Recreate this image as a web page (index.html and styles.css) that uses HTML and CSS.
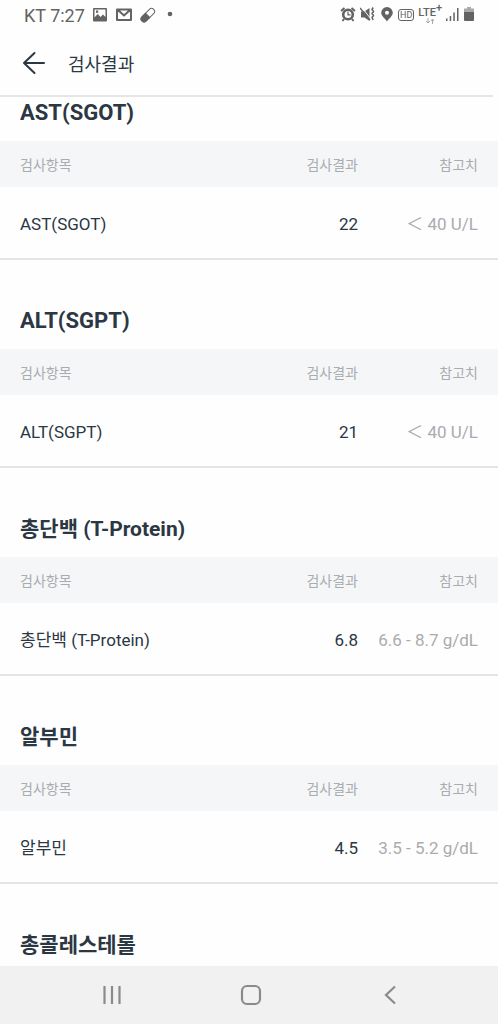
FILE: index.html
```html
<!DOCTYPE html>
<html lang="ko">
<head>
<meta charset="utf-8">
<meta name="viewport" content="width=device-width, initial-scale=1">
<title>검사결과</title>
<link rel="stylesheet" href="styles.css">
</head>
<body>
<div class="status">
  <span class="carrier">KT 7:27</span>
  <div class="status-left">
    <svg class="picture" width="16" height="16" viewBox="0 0 16 16"><path fill="currentColor" fill-rule="evenodd" d="M2 1h12q1 0 1 1v11.500q0 1-1 1H2q-1 0-1-1V2q0-1 1-1zM2.500 2.500v8l3.200-3.500 2.800 3 2.500-2.500 2.500 2.500v-7.500zM4 3.600h2.200v2.200H4z"/></svg>
    <svg class="mail" width="18" height="16" viewBox="0 0 18 16"><path fill="none" stroke="currentColor" stroke-width="2" stroke-linejoin="round" d="M2 2.500h14v10.500H2zM3 3l6 5.500L15 3"/></svg>
    <svg class="pill" width="16" height="16" viewBox="0 0 16 16"><g transform="rotate(-45 8 8)"><rect x="-0.500" y="5" width="16.500" height="6" rx="3" fill="none" stroke="currentColor" stroke-width="1"/><path fill="currentColor" d="M8 4.500v7H2.500a3.500 3.500 0 0 1 0-7z"/></g></svg>
    <svg class="dot" width="6" height="16" viewBox="0 0 6 16"><circle cx="3" cy="7" r="2.300" fill="currentColor"/></svg>
  </div>
  <div class="status-right">
    <svg width="16" height="16" viewBox="0 0 16 16"><path fill="none" stroke="currentColor" stroke-width="2" d="M1 4l3.500-3M15 4l-3.500-3M4 12l-1.500 2M12 12l1.500 2"/><circle cx="8" cy="7.500" r="4.800" fill="none" stroke="currentColor" stroke-width="2.600"/><path fill="none" stroke="currentColor" stroke-width="1.200" d="M8 4.500v3.300h2.500"/></svg>
    <svg width="16" height="16" viewBox="0 0 16 16"><path fill="currentColor" d="M1 4.500h3.500L9.500 1v13L4.500 10.500H1z"/><path stroke="#fff" stroke-width="1" d="M1.500 0l9 11.500"/><path stroke="currentColor" stroke-width="1.400" d="M0 1l10 12"/><path fill="none" stroke="currentColor" stroke-width="1.500" stroke-linejoin="round" d="M13.200 .5l-1.200 2 1.500 2-1.500 2 1.500 2-1.500 2 1.200 2.500"/></svg>
    <svg width="14" height="16" viewBox="0 0 14 16"><path fill="currentColor" fill-rule="evenodd" d="M7 0a5.800 5.800 0 0 1 5.800 5.800C12.800 9 9 11.500 7 14.500 5 11.500 1.200 9 1.200 5.800A5.800 5.800 0 0 1 7 0zm0 3.700a2 2 0 1 0 0 4 2 2 0 0 0 0-4z"/></svg>
    <span class="hd">HD</span>
    <span class="lte"><span>LTE<sup>+</sup></span><svg width="8" height="6" viewBox="0 0 8 6"><path fill="none" stroke="#aaa" d="M2 0v5M0 3l2 2 2-2M6.500 6V1M5 3l1.500-2L8 3"/></svg></span>
    <svg width="14" height="16" viewBox="0 0 14 16"><path fill="currentColor" d="M0 11.500h1.500v2.500H0zM3.700 9h1.500v5H3.700zM7.300 5.500h1.500V14H7.300zM11 1h1.500v13H11z"/></svg>
    <svg width="10" height="16" viewBox="0 0 10 16"><path fill="#aaa" d="M3 0h4v1.500h3V5H0V1.500h3z"/><path fill="currentColor" d="M0 5h10v8q0 1-1 1H1q-1 0-1-1z"/></svg>
  </div>
</div>
<header class="appbar">
  <button class="back" type="button" aria-label="뒤로"><svg width="24" height="24" viewBox="0 0 24 24"><path fill="none" stroke="currentColor" stroke-width="2" stroke-linecap="round" stroke-linejoin="round" d="M12.500 2L2 12l10.500 10M2 12h20"/></svg></button>
  <h1>검사결과</h1>
</header>
<main class="results">
  <section>
    <h2 id="ast" class="latin">AST(SGOT)</h2>
    <table aria-labelledby="ast">
      <thead><tr><th>검사항목</th><th class="value">검사결과</th><th class="range">참고치</th></tr></thead>
      <tbody><tr><td>AST(SGOT)</td><td class="value">22</td><td class="range">&#65308; 40 U/L</td></tr></tbody>
    </table>
  </section>
  <section>
    <h2 id="alt" class="latin">ALT(SGPT)</h2>
    <table aria-labelledby="alt">
      <thead><tr><th>검사항목</th><th class="value">검사결과</th><th class="range">참고치</th></tr></thead>
      <tbody><tr><td>ALT(SGPT)</td><td class="value">21</td><td class="range">&#65308; 40 U/L</td></tr></tbody>
    </table>
  </section>
  <section>
    <h2 id="protein">총단백 (T-Protein)</h2>
    <table aria-labelledby="protein">
      <thead><tr><th>검사항목</th><th class="value">검사결과</th><th class="range">참고치</th></tr></thead>
      <tbody><tr><td>총단백 (T-Protein)</td><td class="value">6.8</td><td class="range">6.6 - 8.7 g/dL</td></tr></tbody>
    </table>
  </section>
  <section>
    <h2 id="albumin">알부민</h2>
    <table aria-labelledby="albumin">
      <thead><tr><th>검사항목</th><th class="value">검사결과</th><th class="range">참고치</th></tr></thead>
      <tbody><tr><td>알부민</td><td class="value">4.5</td><td class="range">3.5 - 5.2 g/dL</td></tr></tbody>
    </table>
  </section>
  <section>
    <h2>총콜레스테롤</h2>
  </section>
</main>
<nav class="navbar">
  <button type="button" aria-label="최근 앱"><svg width="24" height="24" viewBox="0 0 24 24"><path stroke="currentColor" stroke-width="2.200" d="M4.500 3v18M12 3v18M19.500 3v18"/></svg></button>
  <button type="button" aria-label="홈"><svg width="24" height="24" viewBox="0 0 24 24"><rect x="3" y="3" width="18" height="18" rx="5" fill="none" stroke="currentColor" stroke-width="2.200"/></svg></button>
  <button type="button" aria-label="이전"><svg width="24" height="24" viewBox="0 0 24 24"><path fill="none" stroke="currentColor" stroke-width="2.200" d="M17 3.500L8 12l9 8.500"/></svg></button>
</nav>
</body>
</html>
```
FILE: styles.css
```css
* {
  box-sizing: border-box;
}

body {
  margin: 0;
  height: 100vh;
  display: flex;
  flex-direction: column;
  overflow: hidden;
  background: #fefefe;
  color: #2b3743;
  font-family: Roboto, "Noto Sans CJK KR", sans-serif;
  font-size: 17px;
}

svg {
  display: block;
  flex: none;
}

button {
  padding: 0;
  border: 0;
  background: none;
  color: inherit;
}

.status {
  flex: none;
  height: 30px;
  padding: 0 24px;
  display: flex;
  align-items: center;
  color: #636363;
}

.carrier {
  font-size: 18px;
}

.status-left {
  display: flex;
  align-items: center;
  gap: 7px;
  margin-left: 7px;
}

.dot {
  margin-left: 4px;
}

.status-right {
  display: flex;
  align-items: center;
  gap: 4px;
  margin-left: auto;
}

.hd {
  padding: 0 1px;
  border: 1px solid currentColor;
  border-radius: 3px;
  font-size: 9px;
  line-height: 10px;
}

.lte {
  display: flex;
  flex-direction: column;
  align-items: center;
  font-size: 11px;
  font-weight: 500;
  line-height: 11px;
}

.lte sup {
  font-size: 11px;
  line-height: 0;
}

.appbar {
  flex: none;
  height: 67px;
  margin-right: 5px;
  padding: 0 22px;
  display: flex;
  align-items: center;
  gap: 22px;
  border-bottom: 2px solid #e6e6e6;
}

h1 {
  margin: 0;
  font-size: 18px;
  font-weight: 400;
}

.results {
  flex: 1;
  min-height: 0;
  overflow: hidden;
}

section + section {
  margin-top: 45px;
}

h2 {
  margin: 0 20px 12px;
  font-size: 21px;
  font-weight: 700;
  line-height: 32px;
}

.latin {
  font-size: 22px;
}

table {
  width: 100%;
  table-layout: fixed;
  border-collapse: separate;
  border-spacing: 0;
}

th,
td {
  padding: 0 0 0 20px;
  text-align: left;
  font-weight: 400;
  white-space: nowrap;
}

th {
  height: 46px;
  background: #f5f6f8;
  color: #a9acaf;
  font-size: 14px;
}

td {
  height: 73px;
  padding-top: 2px;
  border-bottom: 2px solid #e5e5e5;
  line-height: 20px;
}

.value {
  width: 100px;
  padding-left: 0;
  text-align: right;
}

.range {
  width: 140px;
  padding-left: 0;
  padding-right: 20px;
  text-align: right;
  color: #a9acaf;
}

.navbar {
  flex: none;
  height: 58px;
  padding: 0 39px 0 42px;
  display: grid;
  grid-template-columns: repeat(3, 1fr);
  align-items: center;
  justify-items: center;
  background: #f1f1f1;
  color: #8a8a8a;
}
```
